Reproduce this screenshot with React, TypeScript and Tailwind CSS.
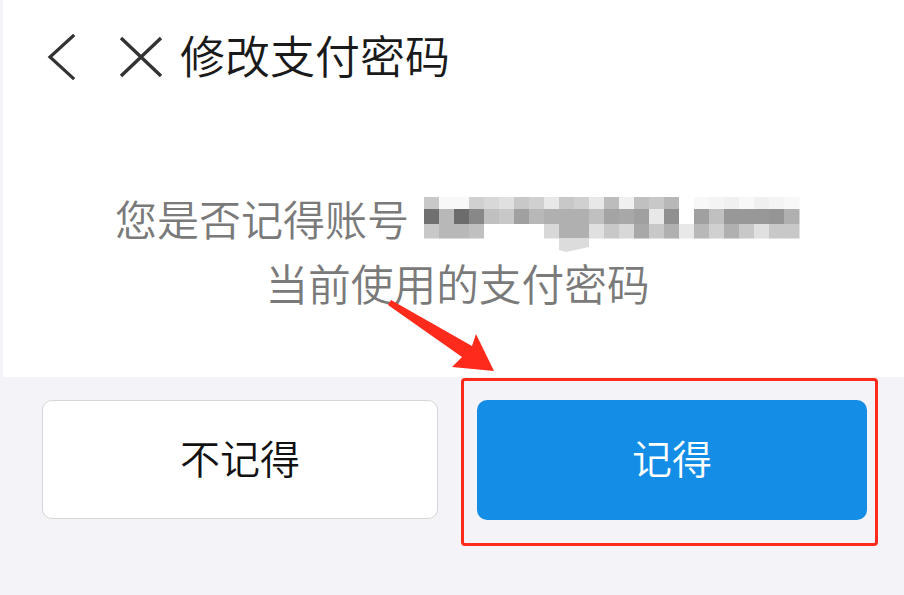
import React from "react";

const rows: number[][] = [
  [0xc8, 0xf8, 0xf8, 0xd0, 0xd8, 0xe0, 0xc8, 0xd0, 0xe8, 0xc8, 0xd0, 0xe8, 0xbc, 0xf0, 0xc0, 0xc8, 0xb8, 0xff, 0xf8, 0xf4, 0xf0, 0xf8, 0xf0, 0xf4, 0xf8],
  [0x70, 0xb8, 0x6c, 0x88, 0xc0, 0xc8, 0xa0, 0xb8, 0xb0, 0xb0, 0xb0, 0xc0, 0xa4, 0xa8, 0xa0, 0xe8, 0x90, 0xff, 0xa0, 0xc0, 0x98, 0x98, 0x98, 0x95, 0xb0],
  [0xc8, 0xb8, 0xb8, 0xc0, 0xff, 0xff, 0xff, 0xff, 0xd8, 0xb0, 0xb0, 0xe0, 0xc8, 0xd8, 0xa8, 0xc8, 0xb0, 0xe8, 0xb8, 0xd0, 0xb0, 0xc8, 0xe0, 0xc8, 0xc8],
];
const rowY = [0, 12, 27];
const rowH = [12, 15, 14];

function Mosaic() {
  return (
    <svg width="376" height="55" viewBox="0 0 376 55" className="block shrink-0">
      {rows.map((r, ri) =>
        r.map((v, ci) => {
          const h = v.toString(16).padStart(2, "0");
          return (
            <rect
              key={`${ri}-${ci}`}
              x={ci * 15}
              y={rowY[ri]}
              width={15.5}
              height={rowH[ri] + 0.5}
              fill={`#${h}${h}${h}`}
            />
          );
        })
      )}
      <polygon points="135,41 165,41 165,50 142,55 135,53" fill="#dcdcdc" />
    </svg>
  );
}

export default function App() {
  return (
    <div className="relative w-[904px] h-[595px] overflow-hidden bg-[#f4f4f8] font-['Noto_Sans_CJK_SC','Noto_Sans',sans-serif]">
      <div className="ml-[3px] h-[377px] bg-white flex flex-col">
        <div className="h-[114px] flex items-center pl-[43px]">
          <svg width="30" height="46" viewBox="0 0 30 46" className="shrink-0">
            <path d="M27 2 L4 23 L27 44" fill="none" stroke="#333" strokeWidth="3.2" strokeLinecap="square" strokeLinejoin="miter" />
          </svg>
          <svg width="46" height="42" viewBox="0 0 46 42" className="shrink-0 ml-[42px]">
            <path d="M3 2 L43 40 M43 2 L3 40" fill="none" stroke="#333" strokeWidth="3.4" />
          </svg>
          <span className="ml-[16px] mb-[6px] text-[45px] leading-none font-[350] text-[#1a1a1a]">修改支付密码</span>
        </div>
        <div className="mt-[72px] pl-[8px] flex flex-col items-center text-[42px] font-[350] text-[#7a7a7a]">
          <div className="h-[64px] flex items-start">
            <span className="leading-[64px] text-[42px]">您是否记得账号</span>
            <div className="ml-[15px] mt-[11px]">
              <Mosaic />
            </div>
          </div>
          <div className="h-[64px] leading-[64px] text-[42.7px]">当前使用的支付密码</div>
        </div>
      </div>
      <div className="pt-[23px] pl-[42px] flex">
        <div className="w-[396px] h-[119px] pb-[6px] bg-white border-[1.5px] border-[#d6d6d6] rounded-[10px] flex items-center justify-center text-[40px] font-[350] text-[#111]">
          不记得
        </div>
        <div className="ml-[39px] w-[390px] h-[120px] pb-[7px] bg-[#148de6] rounded-[10px] flex items-center justify-center text-[40px] font-[350] text-white">
          记得
        </div>
      </div>
      <div className="absolute left-[461px] top-[378px] w-[417px] h-[168px] border-[3.5px] border-[#fe2b1c] rounded-[4px]" />
      <svg className="absolute left-0 top-0 pointer-events-none" width="904" height="595" viewBox="0 0 904 595">
        <polygon points="391,300 472,346 476,334 494,371 452,367 462,357 388,305" fill="#fe2b1c" />
      </svg>
    </div>
  );
}
